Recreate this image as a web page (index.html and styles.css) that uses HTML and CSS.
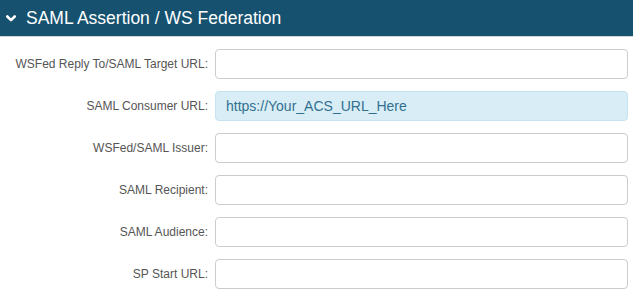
FILE: index.html
```html
<!DOCTYPE html>
<html>
<head>
<meta charset="utf-8">
<link rel="stylesheet" href="styles.css">
</head>
<body>
<div class="panel">
  <div class="panel-heading">
    <svg class="chevron" width="10" height="8" viewBox="0 0 10 8"><path d="M1.3 1.5 L5 5.2 L8.7 1.5" fill="none" stroke="#fff" stroke-width="2.6" stroke-linecap="round" stroke-linejoin="round"/></svg>
    <span class="title">SAML Assertion / WS Federation</span>
  </div>
  <form class="panel-body">
    <div class="row"><label>WSFed Reply To/SAML Target URL:</label><input type="text" class="field"></div>
    <div class="row"><label>SAML Consumer URL:</label><input type="text" class="field info" value="https://Your_ACS_URL_Here"></div>
    <div class="row"><label>WSFed/SAML Issuer:</label><input type="text" class="field"></div>
    <div class="row"><label>SAML Recipient:</label><input type="text" class="field"></div>
    <div class="row"><label>SAML Audience:</label><input type="text" class="field"></div>
    <div class="row"><label>SP Start URL:</label><input type="text" class="field"></div>
  </form>
</div>
</body>
</html>
```
FILE: styles.css
```css
* { box-sizing: border-box; }
html, body { margin: 0; padding: 0; background: #fff; }
body { font-family: "Liberation Sans", Arial, sans-serif; width: 633px; height: 296px; overflow: hidden; }
.panel-heading {
  height: 37px;
  background: #16526f;
  border-bottom: 1px solid #cfd6da;
  display: flex;
  align-items: center;
  padding-left: 6px;
  color: #fff;
}
.chevron { margin-right: 10px; margin-top: 1px; }
.title { font-size: 17.5px; }
.panel-body {
  display: flex;
  flex-direction: column;
  gap: 12px;
  padding: 12px 5px 0 0;
  margin: 0;
}
.row { display: flex; align-items: center; height: 30px; }
.row label {
  width: 208px;
  text-align: right;
  font-size: 12px;
  color: #555;
  margin-right: 7px;
}
.field {
  flex: 1;
  height: 30px;
  border: 1px solid #ccc;
  border-radius: 4px;
  background: #fff;
  font-family: "Liberation Sans", Arial, sans-serif;
  font-size: 14px;
  padding: 0 10px;
  outline: none;
}
.field.info {
  background: #d9edf7;
  border-color: #c5e3f1;
  color: #31708f;
}
```
